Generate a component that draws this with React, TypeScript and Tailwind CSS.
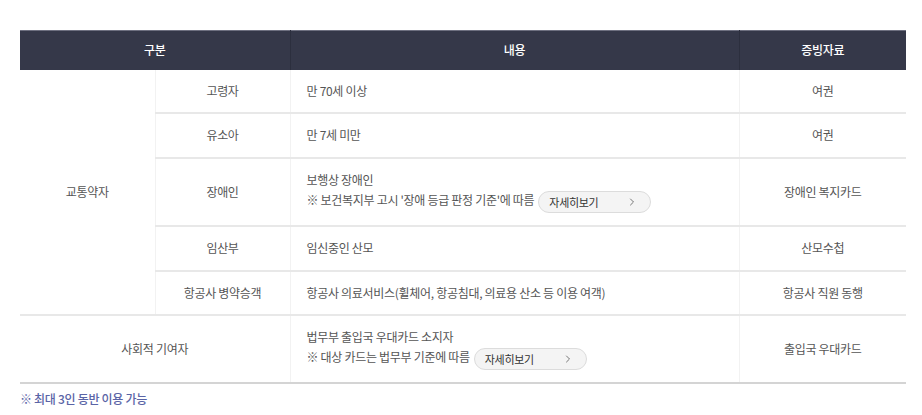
import { ChevronRight } from 'lucide-react';

const FONT = "font-['Noto_Sans_CJK_KR','Noto_Sans',sans-serif]";

function MoreButton() {
  return (
    <button className="ml-1 inline-flex h-[22px] w-[113px] items-center justify-between rounded-full border border-[#dcdcdc] bg-[#f4f4f4] pl-[10px] pr-[12px] align-middle text-[11px] text-[#333]">
      <span>자세히보기</span>
      <ChevronRight size={12} strokeWidth={1.6} className="text-[#555]" />
    </button>
  );
}

const td = 'border-t-2 border-[#e8e8e8] text-[12px] text-[#555]';
const vline = 'border-l border-l-[#f2f2f2]';

export default function App() {
  return (
    <div className={`${FONT} bg-white px-5 pt-[30px] pb-3 w-[922px] h-[415px] tracking-[-0.3px]`}>
      <table className="w-[886px] table-fixed border-collapse">
        <colgroup>
          <col className="w-[135px]" />
          <col className="w-[135px]" />
          <col className="w-[449px]" />
          <col className="w-[167px]" />
        </colgroup>
        <thead>
          <tr className="h-[39px] bg-[#353849] border-t border-t-[#6e7080] text-[12px] font-medium text-white">
            <th colSpan={2} className="font-medium">구분</th>
            <th className="font-medium border-l border-l-[#2c2f3e]">내용</th>
            <th className="font-medium border-l border-l-[#2c2f3e]">증빙자료</th>
          </tr>
        </thead>
        <tbody className="text-center">
          <tr className="h-[43px]">
            <td rowSpan={5} className="text-[12px] text-[#555]">교통약자</td>
            <td className={`${vline} text-[12px] text-[#555]`}>고령자</td>
            <td className={`${vline} text-[12px] text-[#555] text-left pl-4`}>만 70세 이상</td>
            <td className={`${vline} text-[12px] text-[#555]`}>여권</td>
          </tr>
          <tr className="h-[45px]">
            <td className={`${td} ${vline}`}>유소아</td>
            <td className={`${td} ${vline} text-left pl-4`}>만 7세 미만</td>
            <td className={`${td} ${vline}`}>여권</td>
          </tr>
          <tr className="h-[68px]">
            <td className={`${td} ${vline}`}>장애인</td>
            <td className={`${td} ${vline} text-left pl-4 leading-[20px]`}>
              <div>보행상 장애인</div>
              <div>
                ※ 보건복지부 고시 '장애 등급 판정 기준'에 따름
                <MoreButton />
              </div>
            </td>
            <td className={`${td} ${vline}`}>장애인 복지카드</td>
          </tr>
          <tr className="h-[45px]">
            <td className={`${td} ${vline}`}>임산부</td>
            <td className={`${td} ${vline} text-left pl-4`}>임신중인 산모</td>
            <td className={`${td} ${vline}`}>산모수첩</td>
          </tr>
          <tr className="h-[44px]">
            <td className={`${td} ${vline}`}>항공사 병약승객</td>
            <td className={`${td} ${vline} text-left pl-4`}>
              항공사 의료서비스(휠체어, 항공침대, 의료용 산소 등 이용 여객)
            </td>
            <td className={`${td} ${vline}`}>항공사 직원 동행</td>
          </tr>
          <tr className="h-[68px] border-b-2 border-b-[#d4d4d4]">
            <td colSpan={2} className={td}>사회적 기여자</td>
            <td className={`${td} ${vline} text-left pl-4 leading-[20px]`}>
              <div>법무부 출입국 우대카드 소지자</div>
              <div>
                ※ 대상 카드는 법무부 기준에 따름
                <MoreButton />
              </div>
            </td>
            <td className={`${td} ${vline}`}>출입국 우대카드</td>
          </tr>
        </tbody>
      </table>
      <p className="mt-[6px] text-[12px] font-medium text-[#5a64a6]">※ 최대 3인 동반 이용 가능</p>
    </div>
  );
}
